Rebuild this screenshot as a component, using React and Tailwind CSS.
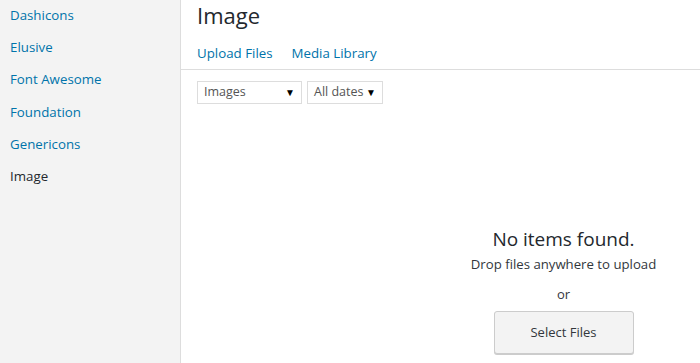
const menu = ["Dashicons", "Elusive", "Font Awesome", "Foundation", "Genericons"];

function Select({ label, width }) {
  return (
    <div
      className={
        "flex h-[23px] items-center justify-between border border-[#ddd] bg-white pl-[6px] pr-[6px] text-[12.5px] text-[#555]" +
        " " +
        width
      }
    >
      <span>{label}</span>
      <span className="text-[10px] text-black">▼</span>
    </div>
  );
}

export default function App() {
  return (
    <div
      className="flex h-[363px] w-[700px] overflow-hidden bg-white"
      style={{ fontFamily: '"Open Sans", sans-serif' }}
    >
      <aside className="w-[181px] shrink-0 border-r border-[#ddd] bg-[#f3f3f3] pt-[4px]">
        {menu.map((m) => (
          <div key={m} className="h-[32.2px] pl-[10px] text-[13.3px] leading-[22px] text-[#0073aa]">
            {m}
          </div>
        ))}
        <div className="pl-[10px] text-[13.3px] leading-[22px] text-[#23282d]">Image</div>
      </aside>
      <main className="flex flex-1 flex-col">
        <div className="border-b border-[#ddd]">
          <h1 className="pl-[16px] pt-[1px] text-[22px] leading-[28px] text-[#23282d]">Image</h1>
          <div className="flex gap-[19px] pl-[16px] pt-[14px] pb-[6px] text-[13.3px] leading-[20px] text-[#0073aa]">
            <span>Upload Files</span>
            <span>Media Library</span>
          </div>
        </div>
        <div className="flex gap-[5px] pl-[16px] pt-[11px]">
          <Select label="Images" width="w-[105px]" />
          <Select label="All dates" width="w-[76px]" />
        </div>
        <div className="flex flex-1 flex-col items-center pt-[122px] pl-[246px] text-[#23282d]">
          <div className="text-[19px] leading-[26px]">No items found.</div>
          <div className="mt-[2px] text-[13.2px] leading-[20px] text-[#32373c]">Drop files anywhere to upload</div>
          <div className="mt-[10px] text-[13px] leading-[20px] text-[#32373c]">or</div>
          <button className="mt-[7px] h-[43px] w-[140px] rounded-[3px] border border-[#ccc] bg-[#f3f3f3] text-[13px] text-[#32373c] shadow-[0_1px_0_#ccc]">
            Select Files
          </button>
        </div>
      </main>
    </div>
  );
}
